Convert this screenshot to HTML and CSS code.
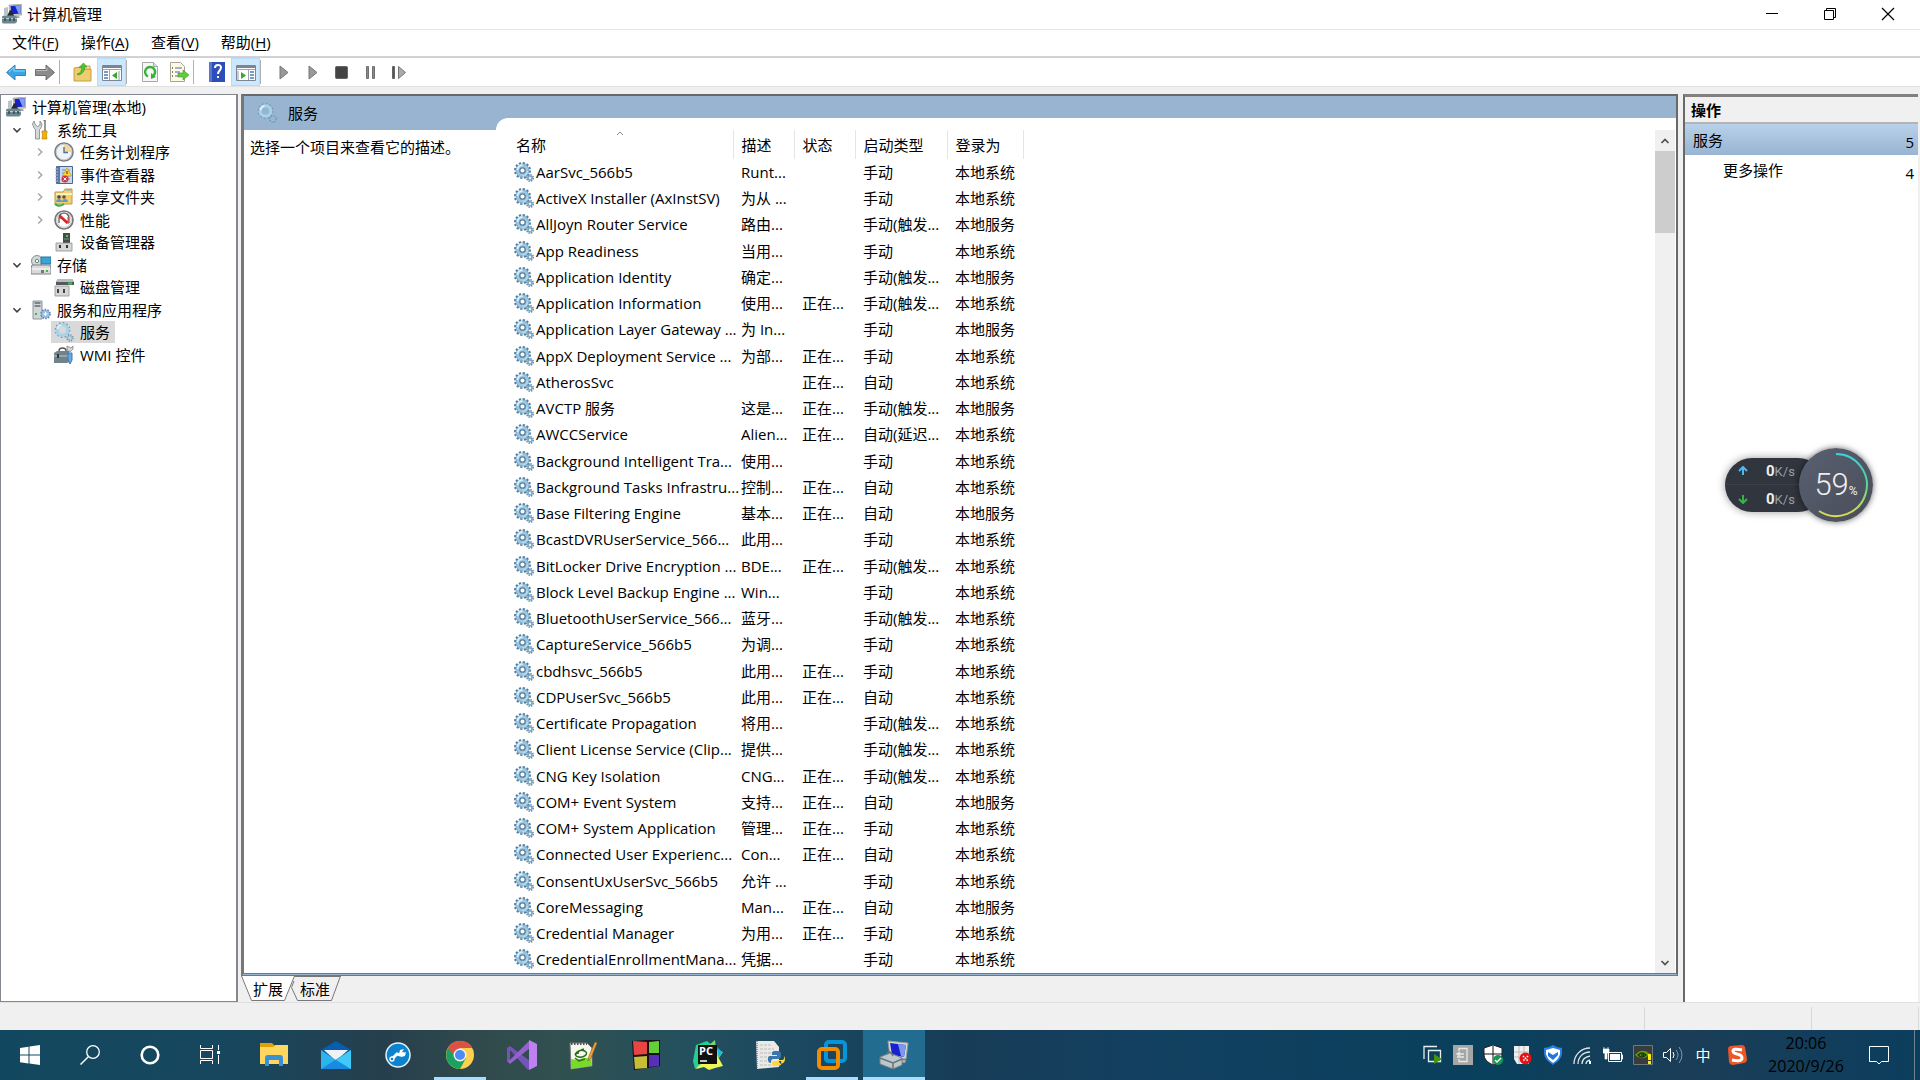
FILE: index.html
```html
<!DOCTYPE html>
<html lang="zh-CN">
<head>
    <meta charset="UTF-8">
    <meta name="viewport" content="width=device-width, initial-scale=1.0">
    <title>计算机管理</title>
    <link rel="stylesheet" href="styles.css">
</head>
<body>
    <!-- Shared icons -->
    <svg class="sprite" aria-hidden="true">
        <symbol id="computer" viewBox="0 0 20 20">
            <path d="M7 1l13-1v11l-12 1z" fill="#c9c8c0" stroke="#8d8d88" stroke-width=".5"/>
            <path d="M8.500 2l10-.7v8.200l-9 .8z" fill="#1420c8"/>
            <path d="M13 1.700l5.500-.4v8.200l-2 .2z" fill="#7f9df5"/>
            <path d="M2 4l4-1v8H2z" fill="#b8c4cc"/>
            <path d="M5 12l3-6 2 1 2 5z" fill="#262a33"/>
            <path d="M11 12h6l1 2h-6z" fill="#aaa"/>
            <path d="M0 12.500l2-1h10l3 1.500v5l-2 1.500H1l-1-1z" fill="#6d8791"/>
            <path d="M0 14.500h15" stroke="#b9cdd3"/>
            <path d="M3 14v3M8 14v3M12 14v3" stroke="#34444c" stroke-width="1.500"/>
        </symbol>
        <symbol id="gear" viewBox="0 0 20 20">
            <circle cx="8.500" cy="8.500" r="7.600" fill="none" stroke="#4f7c9e" stroke-width="1.800" stroke-dasharray="2.300 1.680"/>
            <circle cx="8.500" cy="8.500" r="6.500" fill="#9cc8e4" stroke="#6d9cbc" stroke-width=".8"/>
            <path d="M3.500 8a5 5 0 0 1 5-5" fill="none" stroke="#dcf1fc" stroke-width="1.800"/>
            <path d="M13.500 9a5 5 0 0 1-5 4.700" fill="none" stroke="#b8dcf0" stroke-width="1.500"/>
            <circle cx="8.500" cy="8.500" r="2.700" fill="#fff" stroke="#587c98" stroke-width="1.300"/>
            <circle cx="16" cy="16" r="3.200" fill="none" stroke="#5f89a8" stroke-width="1.600" stroke-dasharray="1.400 1.110"/>
            <circle cx="16" cy="16" r="2" fill="#e8f4fa" stroke="#7fa6c2" stroke-width="1.600"/>
        </symbol>
        <symbol id="gear-light" viewBox="0 0 20 20">
            <circle cx="8.500" cy="8" r="7.200" fill="none" stroke="#7499b6" stroke-width="1.400" stroke-dasharray="1.700 2.070"/>
            <circle cx="8.500" cy="8" r="5.300" fill="none" stroke="#a6d2ea" stroke-width="3"/>
            <path d="M3.500 7a5 5 0 0 1 4-4" fill="none" stroke="#e4f6fd" stroke-width="1.500"/>
            <circle cx="16" cy="16" r="3" fill="none" stroke="#6b8eaa" stroke-width="1.500" stroke-dasharray="1.200 1.150"/>
            <circle cx="16" cy="16" r="1.800" fill="none" stroke="#98bdd5" stroke-width="1.300"/>
        </symbol>
        <symbol id="down" viewBox="0 0 10 10"><path d="M2 3.500l3 3 3-3" fill="none" stroke="#404040" stroke-width="1.300"/></symbol>
        <symbol id="right" viewBox="0 0 10 10"><path d="M3.500 2L6.500 5 3.500 8" fill="none" stroke="#a6a6a6" stroke-width="1.200"/></symbol>
        <symbol id="play" viewBox="0 0 20 20"><path d="M6 4v13l8-6.500z" fill="#999" stroke="#777"/></symbol>
    </svg>

    <header class="titlebar">
        <svg class="icon"><use href="#computer"/></svg>
        <h1>计算机管理</h1>
        <div class="window-buttons">
            <button aria-label="最小化"><svg viewBox="0 0 14 14"><path d="M1 6.500h12" stroke="#000"/></svg></button>
            <button aria-label="还原"><svg viewBox="0 0 14 14"><path d="M1.500 3.500h9v9h-9zM3.500 3.500v-2h9v9h-2" fill="none" stroke="#000"/></svg></button>
            <button aria-label="关闭"><svg viewBox="0 0 14 14"><path d="M1 1l12 12M13 1L1 13" stroke="#000" stroke-width="1.200"/></svg></button>
        </div>
    </header>

    <nav class="menubar">
        <button>文件(<u>F</u>)</button>
        <button>操作(<u>A</u>)</button>
        <button>查看(<u>V</u>)</button>
        <button>帮助(<u>H</u>)</button>
    </nav>

    <div class="toolbar">
        <button aria-label="后退"><svg class="icon" viewBox="0 0 20 20"><path d="M.5 10.500L9 3v4.500h10.500v6H9V18z" fill="#35a7e8" stroke="#4a7fa5"/><path d="M3 10l5-4.500V9h11" fill="none" stroke="#8fd6fb"/></svg></button>
        <button aria-label="前进"><svg class="icon" viewBox="0 0 20 20"><path d="M19.500 10.500L11 3v4.500H.5v6H11V18z" fill="#8b8b8b" stroke="#6c6c6c"/><path d="M1 8.500h11V5.500" fill="none" stroke="#bbb"/></svg></button>
        <span class="separator"></span>
        <button aria-label="向上"><svg class="icon" viewBox="0 0 20 20"><path d="M1 6l7-1 1 2h9v12H1z" fill="#f0cb6f" stroke="#c99e45"/><path d="M11 4h6v3h-6z" fill="#f9e6ac" stroke="#c99e45"/><path d="M4 12c4-1 5-4 4.500-7L6 5.500 10.500 1 14 5l-2.500.2C12 9 9 12.500 5 13z" fill="#4dc52d" stroke="#3a8f2a" stroke-width=".6"/></svg></button>
        <button class="active" aria-label="显示/隐藏控制台树"><svg class="icon" viewBox="0 0 20 20"><path d="M.5 3.500h19v15H.5z" fill="#fff" stroke="#7d8690"/><path d="M1 4h18v2H1z" fill="#7d8690"/><path d="M1 7.500h18M7.500 8v10" stroke="#9da6ae"/><path d="M2 10h4M2 13h4M2 16h4" stroke="#4d79ad" stroke-width="1.400"/><path d="M10 13.500L15 10v7z" fill="#38a82c"/><path d="M17 9v9" stroke="#c5ccd3" stroke-width="2"/></svg></button>
        <span class="separator"></span>
        <button aria-label="刷新"><svg class="icon" viewBox="0 0 20 20"><path d="M2.500.5h11l4 4v15h-15z" fill="#f6f6f6" stroke="#a8a8a8"/><path d="M13.500.5v4h4" fill="#ddd" stroke="#a8a8a8"/><path d="M8 14.500A5 5 0 1 1 13 14" fill="none" stroke="#35b338" stroke-width="2.400"/><path d="M11 11v6l5-2z" fill="#35b338"/></svg></button>
        <button aria-label="导出列表"><svg class="icon" viewBox="0 0 20 20"><path d="M1.500.5h10l4 4v15h-14z" fill="#fdfae6" stroke="#a8a491"/><path d="M3 6h1M3 10h1M3 14h1" stroke="#555" stroke-width="1.500"/><path d="M6 6h7M6 10h5M6 14h5" stroke="#8e91c5" stroke-width="1.500"/><path d="M9 11h5V8l6 5-6 5v-3H9z" fill="#60cb3d" stroke="#3f9c2e" stroke-width=".6"/></svg></button>
        <span class="separator"></span>
        <button aria-label="帮助"><svg class="icon" viewBox="0 0 20 20"><path d="M2 0h16v20H2z" fill="#2c4eb8"/><path d="M2 0h3v20H2z" fill="#5876cf"/><path d="M8 6c0-4 6-4 6-.5 0 3-3 3-3 6.500" fill="none" stroke="#fff" stroke-width="2"/><path d="M10 14h2v2h-2z" fill="#fff"/></svg></button>
        <button class="active" aria-label="显示/隐藏操作窗格"><svg class="icon" viewBox="0 0 20 20"><path d="M.5 3.500h19v15H.5z" fill="#fff" stroke="#7d8690"/><path d="M1 4h18v2H1z" fill="#7d8690"/><path d="M1 7.500h18M12.500 8v10" stroke="#9da6ae"/><path d="M14 10h4M14 13h4M14 16h4" stroke="#4d79ad" stroke-width="1.400"/><path d="M10 13.500L5 10v7z" fill="#38a82c"/><path d="M2 9v9" stroke="#c5ccd3" stroke-width="2"/></svg></button>
        <span class="separator"></span>
        <button aria-label="启动服务"><svg class="icon"><use href="#play"/></svg></button>
        <button aria-label="继续服务"><svg class="icon"><use href="#play"/></svg></button>
        <button aria-label="停止服务"><svg class="icon" viewBox="0 0 20 20"><rect x="3.500" y="4.500" width="12" height="12" rx="1" fill="#444" stroke="#666"/></svg></button>
        <button aria-label="暂停服务"><svg class="icon" viewBox="0 0 20 20"><path d="M5.500 4.500h2v12h-2zM11.500 4.500h2v12h-2z" fill="#888" stroke="#707070"/></svg></button>
        <button aria-label="重新启动服务"><svg class="icon" viewBox="0 0 20 20"><path d="M2.500 4.500h2v12h-2z" fill="#555" stroke="#666"/><path d="M8.500 4.500v12l7-6z" fill="#aaa" stroke="#777"/></svg></button>
    </div>

    <main class="workspace">
        <aside class="tree">
            <ul>
                <li><span class="node"><svg class="icon"><use href="#computer"/></svg>计算机管理(本地)</span></li>
                <li class="level-1">
                    <button aria-label="折叠"><svg><use href="#down"/></svg></button>
                    <span class="node"><svg class="icon" viewBox="0 0 20 20"><path d="M3 1L1.500 4 3 8l1.500 1.500V19h4V9.500L10 8l1-4-2-3v4L6.500 6.500 4.500 5z" fill="#d5d9da" stroke="#7e8486" stroke-width=".8"/><path d="M12.500.5h1.500V11" fill="none" stroke="#777" stroke-width="1.500"/><path d="M11 11h5v2l-.7 1 .7 5h-5l.7-5-.7-1z" fill="#f5b000" stroke="#bd8500" stroke-width=".7"/></svg>系统工具</span>
                </li>
                <li class="level-2">
                    <button aria-label="展开"><svg><use href="#right"/></svg></button>
                    <span class="node"><svg class="icon" viewBox="0 0 20 20"><circle cx="10" cy="10" r="9" fill="#eef3f8" stroke="#7b7f84" stroke-width="1.700"/><circle cx="10" cy="10" r="7.800" fill="none" stroke="#c4c9ce"/><path d="M10 2.500V10h7.500A7.500 7.500 0 0 0 10 2.500z" fill="#f7d797"/><path d="M10 5v5.500h4" fill="none" stroke="#51729c" stroke-width="1.400"/></svg>任务计划程序</span>
                </li>
                <li class="level-2">
                    <button aria-label="展开"><svg><use href="#right"/></svg></button>
                    <span class="node"><svg class="icon" viewBox="0 0 20 20"><path d="M2.500 1.500h16v17h-16z" fill="#c6d9f0" stroke="#4b6796"/><path d="M3 2h3v16H3z" fill="#5a79b0"/><path d="M1 4h3M1 7h3M1 10h3M1 13h3M1 16h3" stroke="#bbb"/><path d="M8 5h8M8 8h8M8 11h8M8 14h8" stroke="#708dbb"/><path d="M13 3l4.500 8h-9z" fill="#ffd633" stroke="#c49a12" stroke-width=".6"/><path d="M13 6v3" stroke="#333"/><circle cx="11" cy="14" r="3.500" fill="#d9323b"/><path d="M9.500 12.500l3 3m0-3l-3 3" stroke="#fff"/></svg>事件查看器</span>
                </li>
                <li class="level-2">
                    <button aria-label="展开"><svg><use href="#right"/></svg></button>
                    <span class="node"><svg class="icon" viewBox="0 0 20 20"><path d="M1 5h8l2-3h7v15H1z" fill="#f2cf72" stroke="#bd984b"/><path d="M2 7h16" stroke="#fff0b5" stroke-width="2"/><path d="M12 3h5" stroke="#76a9ce"/><circle cx="5" cy="10" r="1.800" fill="#374c61"/><circle cx="10" cy="10" r="1.800" fill="#6a4e31"/><path d="M2 15c0-4 6-4 6 0zM8 15c0-4 6-4 6 0z" fill="#599bc8"/><path d="M1 17c3 3 6 2 9 0" fill="none" stroke="#36aa4c" stroke-width="2"/></svg>共享文件夹</span>
                </li>
                <li class="level-2">
                    <button aria-label="展开"><svg><use href="#right"/></svg></button>
                    <span class="node"><svg class="icon" viewBox="0 0 20 20"><circle cx="10" cy="10" r="9" fill="#fff" stroke="#777" stroke-width="1.700"/><circle cx="10" cy="10" r="7.300" fill="none" stroke="#c4c4c4"/><path d="M5 13V8a5 5 0 0 1 10 0v5" fill="none" stroke="#555" stroke-width="1.200"/><path d="M6 6L13.500 13" stroke="#df2029" stroke-width="2.600"/><path d="M6 5v4M14 7v7" stroke="#df2029"/></svg>性能</span>
                </li>
                <li class="level-2">
                    <span class="node"><svg class="icon" viewBox="0 0 20 20"><path d="M9 1h7v10H9z" fill="#454c4b"/><path d="M12 3h2v2h-2z" fill="#42d35a"/><path d="M10 7h5" stroke="#888"/><path d="M2 11h16v8H2z" fill="#d5d6d7" stroke="#8f9091" stroke-width=".8"/><path d="M5 13h2v3H5zM12 13h2v3h-2z" fill="#333"/></svg>设备管理器</span>
                </li>
                <li class="level-1">
                    <button aria-label="折叠"><svg><use href="#down"/></svg></button>
                    <span class="node"><svg class="icon" viewBox="0 0 20 20"><circle cx="6" cy="6" r="5.500" fill="#d2d9d9" stroke="#87908f"/><circle cx="6" cy="6" r="1.700" fill="#fff" stroke="#77807f"/><path d="M10 2h10v7H10z" fill="#38a4d8" stroke="#26779f"/><path d="M1 10h18l1 3v6H0v-6z" fill="#d9dadb" stroke="#7f8385"/><path d="M1 14h18" stroke="#fff"/><path d="M15 15h2v2h-2z" fill="#36bb42"/><path d="M10 15h3v3h-3z" fill="#777"/></svg>存储</span>
                </li>
                <li class="level-2">
                    <span class="node"><svg class="icon" viewBox="0 0 20 20"><path d="M4 2h14l2 3v3H2V5z" fill="#555b5b"/><path d="M4 2h14l2 3H2z" fill="#b5babb"/><path d="M14 5.500h4v2h-4z" fill="#35ce55"/><path d="M1 9h14v10H1z" fill="#d5d6d7" stroke="#8f9091" stroke-width=".8"/><path d="M3 12h2v4H3zM9 12h2v4H9z" fill="#444"/></svg>磁盘管理</span>
                </li>
                <li class="level-1">
                    <button aria-label="折叠"><svg><use href="#down"/></svg></button>
                    <span class="node"><svg class="icon" viewBox="0 0 20 20"><path d="M2 1h9v18H2z" fill="#cfd5d8" stroke="#8c969b"/><path d="M3.500 3h6M3.500 6h6" stroke="#5d6c73" stroke-width="1.500"/><path d="M4 14h2" stroke="#36bb42" stroke-width="2"/><circle cx="14.500" cy="14" r="4.300" fill="#87acd0" stroke="#5f86b1" stroke-width="2" stroke-dasharray="1.500 1.200"/><circle cx="14.500" cy="14" r="3.700" fill="#9dbfe0"/><path d="M12.500 14h4m-2-2v4" stroke="#fff"/></svg>服务和应用程序</span>
                </li>
                <li class="level-2">
                    <span class="node selected"><svg class="icon"><use href="#gear-light"/></svg>服务</span>
                </li>
                <li class="level-2">
                    <span class="node"><svg class="icon" viewBox="0 0 20 20"><path d="M5 6c0-4 7-4 7 0" fill="none" stroke="#555" stroke-width="1.500"/><path d="M0 8l3-2h12v11l-2 1H0z" fill="#71838b"/><path d="M0 11h14" stroke="#bdc9ce"/><path d="M4 9v4" stroke="#333" stroke-width="2"/><path d="M13 1v4l3 2 3-3V1l-2 2-2-1z" fill="#d4d8da" stroke="#777" stroke-width=".7"/><path d="M14 8h4v7l-2 4-2-4z" fill="#6aaae2" stroke="#3f76ac"/></svg>WMI 控件</span>
                </li>
            </ul>
        </aside>

        <section class="center">
            <div class="view">
                <div class="detail">
                    <h2><svg class="icon"><use href="#gear-light"/></svg>服务</h2>
                    <p>选择一个项目来查看它的描述。</p>
                </div>
                <div class="list">
                    <table>
                        <colgroup><col class="col-name"><col class="col-desc"><col class="col-state"><col class="col-type"><col class="col-user"></colgroup>
                        <thead>
                            <tr><th>名称<svg class="sort" viewBox="0 0 8 5"><path d="M1 4l3-3 3 3" fill="none" stroke="#888"/></svg></th><th>描述</th><th>状态</th><th>启动类型</th><th>登录为</th></tr>
                        </thead>
                        <tbody>
                            <tr><td><svg class="icon"><use href="#gear"/></svg>AarSvc_566b5</td><td>Runt...</td><td></td><td>手动</td><td>本地系统</td></tr>
                            <tr><td><svg class="icon"><use href="#gear"/></svg>ActiveX Installer (AxInstSV)</td><td>为从 ...</td><td></td><td>手动</td><td>本地系统</td></tr>
                            <tr><td><svg class="icon"><use href="#gear"/></svg>AllJoyn Router Service</td><td>路由...</td><td></td><td>手动(触发...</td><td>本地服务</td></tr>
                            <tr><td><svg class="icon"><use href="#gear"/></svg>App Readiness</td><td>当用...</td><td></td><td>手动</td><td>本地系统</td></tr>
                            <tr><td><svg class="icon"><use href="#gear"/></svg>Application Identity</td><td>确定...</td><td></td><td>手动(触发...</td><td>本地服务</td></tr>
                            <tr><td><svg class="icon"><use href="#gear"/></svg>Application Information</td><td>使用...</td><td>正在...</td><td>手动(触发...</td><td>本地系统</td></tr>
                            <tr><td><svg class="icon"><use href="#gear"/></svg>Application Layer Gateway ...</td><td>为 In...</td><td></td><td>手动</td><td>本地服务</td></tr>
                            <tr><td><svg class="icon"><use href="#gear"/></svg>AppX Deployment Service ...</td><td>为部...</td><td>正在...</td><td>手动</td><td>本地系统</td></tr>
                            <tr><td><svg class="icon"><use href="#gear"/></svg>AtherosSvc</td><td></td><td>正在...</td><td>自动</td><td>本地系统</td></tr>
                            <tr><td><svg class="icon"><use href="#gear"/></svg>AVCTP 服务</td><td>这是...</td><td>正在...</td><td>手动(触发...</td><td>本地服务</td></tr>
                            <tr><td><svg class="icon"><use href="#gear"/></svg>AWCCService</td><td>Alien...</td><td>正在...</td><td>自动(延迟...</td><td>本地系统</td></tr>
                            <tr><td><svg class="icon"><use href="#gear"/></svg>Background Intelligent Tra...</td><td>使用...</td><td></td><td>手动</td><td>本地系统</td></tr>
                            <tr><td><svg class="icon"><use href="#gear"/></svg>Background Tasks Infrastru...</td><td>控制...</td><td>正在...</td><td>自动</td><td>本地系统</td></tr>
                            <tr><td><svg class="icon"><use href="#gear"/></svg>Base Filtering Engine</td><td>基本...</td><td>正在...</td><td>自动</td><td>本地服务</td></tr>
                            <tr><td><svg class="icon"><use href="#gear"/></svg>BcastDVRUserService_566...</td><td>此用...</td><td></td><td>手动</td><td>本地系统</td></tr>
                            <tr><td><svg class="icon"><use href="#gear"/></svg>BitLocker Drive Encryption ...</td><td>BDE...</td><td>正在...</td><td>手动(触发...</td><td>本地系统</td></tr>
                            <tr><td><svg class="icon"><use href="#gear"/></svg>Block Level Backup Engine ...</td><td>Win...</td><td></td><td>手动</td><td>本地系统</td></tr>
                            <tr><td><svg class="icon"><use href="#gear"/></svg>BluetoothUserService_566...</td><td>蓝牙...</td><td></td><td>手动(触发...</td><td>本地系统</td></tr>
                            <tr><td><svg class="icon"><use href="#gear"/></svg>CaptureService_566b5</td><td>为调...</td><td></td><td>手动</td><td>本地系统</td></tr>
                            <tr><td><svg class="icon"><use href="#gear"/></svg>cbdhsvc_566b5</td><td>此用...</td><td>正在...</td><td>手动</td><td>本地系统</td></tr>
                            <tr><td><svg class="icon"><use href="#gear"/></svg>CDPUserSvc_566b5</td><td>此用...</td><td>正在...</td><td>自动</td><td>本地系统</td></tr>
                            <tr><td><svg class="icon"><use href="#gear"/></svg>Certificate Propagation</td><td>将用...</td><td></td><td>手动(触发...</td><td>本地系统</td></tr>
                            <tr><td><svg class="icon"><use href="#gear"/></svg>Client License Service (Clip...</td><td>提供...</td><td></td><td>手动(触发...</td><td>本地系统</td></tr>
                            <tr><td><svg class="icon"><use href="#gear"/></svg>CNG Key Isolation</td><td>CNG...</td><td>正在...</td><td>手动(触发...</td><td>本地系统</td></tr>
                            <tr><td><svg class="icon"><use href="#gear"/></svg>COM+ Event System</td><td>支持...</td><td>正在...</td><td>自动</td><td>本地服务</td></tr>
                            <tr><td><svg class="icon"><use href="#gear"/></svg>COM+ System Application</td><td>管理...</td><td>正在...</td><td>手动</td><td>本地系统</td></tr>
                            <tr><td><svg class="icon"><use href="#gear"/></svg>Connected User Experienc...</td><td>Con...</td><td>正在...</td><td>自动</td><td>本地系统</td></tr>
                            <tr><td><svg class="icon"><use href="#gear"/></svg>ConsentUxUserSvc_566b5</td><td>允许 ...</td><td></td><td>手动</td><td>本地系统</td></tr>
                            <tr><td><svg class="icon"><use href="#gear"/></svg>CoreMessaging</td><td>Man...</td><td>正在...</td><td>自动</td><td>本地服务</td></tr>
                            <tr><td><svg class="icon"><use href="#gear"/></svg>Credential Manager</td><td>为用...</td><td>正在...</td><td>手动</td><td>本地系统</td></tr>
                            <tr><td><svg class="icon"><use href="#gear"/></svg>CredentialEnrollmentMana...</td><td>凭据...</td><td></td><td>手动</td><td>本地系统</td></tr>
                        </tbody>
                    </table>
                    <div class="scrollbar">
                        <button aria-label="向上滚动"><svg viewBox="0 0 10 10"><path d="M1.500 7L5 3.500 8.500 7" fill="none" stroke="#505050" stroke-width="1.700"/></svg></button>
                        <div class="thumb"></div>
                        <button aria-label="向下滚动"><svg viewBox="0 0 10 10"><path d="M1.500 3L5 6.500 8.500 3" fill="none" stroke="#505050" stroke-width="1.700"/></svg></button>
                    </div>
                </div>
            </div>
            <div class="tabs">
                <button class="current"><svg viewBox="0 0 54 26"><path d="M0 0l10 25h34L53 0z" fill="#fff"/><path d="M.5 0l10 24.500h33L53.500 0" fill="none" stroke="#777"/></svg><span>扩展</span></button>
                <button><svg viewBox="0 0 54 26"><path d="M3.500 .5h46M.500 11.500l6 13h34L49.500 0M.500 11.500L3 5" fill="none" stroke="#777"/></svg><span>标准</span></button>
            </div>
        </section>

        <aside class="actions">
            <h2>操作</h2>
            <button class="group"><span>服务</span><span class="mark">5</span></button>
            <button class="more"><span>更多操作</span><span class="mark">4</span></button>
        </aside>
    </main>

    <footer class="statusbar"><span></span><span></span><span></span></footer>

    <div class="taskbar">
        <div class="system">
            <button aria-label="开始"><svg viewBox="0 0 20 20"><path d="M0 3l8.500-1.200v7.700H0zM9.500 1.600L20 0v9.500H9.500zM0 10.500h8.500v7.900L0 17.200zM9.500 10.500H20V20L9.500 18.500z" fill="#fff"/></svg></button>
            <button aria-label="搜索"><svg viewBox="0 0 20 20"><circle cx="13" cy="7" r="6.300" fill="none" stroke="#fff" stroke-width="1.300"/><path d="M8.500 11.500L.5 19.500" stroke="#fff" stroke-width="1.500"/></svg></button>
            <button aria-label="Cortana"><svg viewBox="0 0 20 20"><circle cx="10" cy="10" r="8.300" fill="none" stroke="#fff" stroke-width="2.600"/></svg></button>
            <button aria-label="任务视图"><svg viewBox="0 0 20 20"><path d="M.5 0v3.500h12V0M.5 5.500h12v8H.5zM.5 19v-3.500h12V19M18.500 0v5M18.500 10v9" fill="none" stroke="#fff"/><path d="M17 6h3v3h-3z" fill="#fff"/></svg></button>
        </div>
        <div class="apps">
            <button aria-label="文件资源管理器"><svg viewBox="0 0 30 30"><path d="M1 3h12l2 2v3H1z" fill="#dfa008"/><path d="M1 7h13l2-2h13v19H1z" fill="#ffd65e"/><path d="M6 26V18q0-3 3-3h12q3 0 3 3v8h-4v-6H10v6z" fill="#3c91d6"/></svg></button>
            <button aria-label="邮件"><svg viewBox="0 0 30 30"><path d="M0 10L15 1l15 9-15 9z" fill="#075eb0"/><path d="M3 10h24L15 21z" fill="#f1f2f3"/><path d="M0 10v19h30V10L15 20z" fill="#2db4ef"/><path d="M0 29L30 10v19z" fill="#188be1"/><path d="M15 20l15 9V10z" fill="#42c8f4"/></svg></button>
            <button aria-label="系统工具"><svg viewBox="0 0 30 30"><circle cx="15" cy="15" r="12" fill="#0b83cf" stroke="#e8f3fa" stroke-width="1.500"/><path d="M9 19l5-5 3 1 4-2" fill="none" stroke="#fff" stroke-width="3"/><circle cx="9" cy="19" r="2" fill="#0b83cf" stroke="#fff" stroke-width="1.300"/><path d="M21 9l-4 1-1 4 2 3 4-1 1-4-3 1-1-1z" fill="#fff"/></svg></button>
            <button class="running" aria-label="Google Chrome"><svg viewBox="0 0 30 30"><circle cx="15" cy="15" r="14" fill="#ffd04b"/><path d="M3 8a14 14 0 0 0 12 21l6-11-6-3z" fill="#1aa260"/><path d="M3 8A14 14 0 0 1 27.500 8H15l-6 7z" fill="#dd5145"/><circle cx="15" cy="15" r="6.500" fill="#f1f1f1"/><circle cx="15" cy="15" r="5" fill="#4c8bf5"/></svg></button>
            <button aria-label="Visual Studio"><svg viewBox="0 0 30 30"><path d="M0 8l3-2 20 15v9l-3-1L3 10v12l-3-1z" fill="#7752b8"/><path d="M0 21l3 3L23 8V0L3 20z" fill="#9660d1"/><path d="M22 0l8 4v22l-8 4z" fill="#bd82f0"/></svg></button>
            <button aria-label="Notepad++"><svg viewBox="0 0 30 30"><path d="M1 3h17l5 5v18L2 29z" fill="#f5f7ef" stroke="#777"/><path d="M2 19c7 2 13-2 20-1v8L2 29z" fill="#77db29"/><path d="M2 4h16" stroke="#555" stroke-width="2" stroke-dasharray="1.500 1.500"/><path d="M6 15c2-5 8-6 11-3 2 2-2 6-7 5s-4-4 0-4M6 18l4 3 6-2M12 10l3-1" fill="none" stroke="#2b6a1b" stroke-width="1.400"/><path d="M28 3l-6 15-3 3 1-5 6-14z" fill="#f2a637" stroke="#91602a" stroke-width=".7"/></svg></button>
            <button aria-label="色块"><svg viewBox="0 0 30 30"><path d="M1 1l15-1h13v26L3 30z" fill="#181018"/><path d="M2 1l14 1v12L3 15z" fill="#e74541"/><path d="M18 2l10-1v12H18z" fill="#63ce38"/><path d="M3 17l13-1v12L4 29z" fill="#c8bd37"/><path d="M18 15h10v11l-10 1z" fill="#5730b9"/></svg></button>
            <button aria-label="PyCharm"><svg viewBox="0 0 30 30"><path d="M3 5l11-4 5 4-2 13L2 29 0 21z" fill="#24cf91"/><path d="M16 5l6-5 1 9 7 3-4 6z" fill="#7ed76a"/><path d="M24 7l5 5-3 6z" fill="#13bce8"/><path d="M4 27l19-14 7 13-8 2-6 2-5-3-8 2z" fill="#edf658"/><path d="M5 5h19v19H5z" fill="#111"/><path d="M7 21h7" stroke="#fff" stroke-width="1.500"/><text x="6" y="15" fill="#fff" font-size="11" font-weight="700">PC</text></svg></button>
            <button aria-label="Python"><svg viewBox="0 0 30 30"><path d="M1 1h18l5 6v20L2 29z" fill="#e9e9e7"/><path d="M2 1v28" stroke="#555" stroke-dasharray="1 1"/><path d="M5 5h12M5 9h14M5 13h12M5 17h10M5 21h8M5 25h12" stroke="#bbb" stroke-dasharray="3 1"/><path d="M21 11c-5 0-4 2-4 4h5v1h-7c-3 0-3 7 1 7 0-4 1-4 4-4 4 0 6 0 6-4s-1-4-5-4z" fill="#3977aa"/><path d="M22 26c6 0 4-3 4-5h-4c-5 0-5 1-5 3s1 2 5 2zM22 20h5c2 0 2-1 2-4 2 3 1 7-3 8z" fill="#ffd642"/></svg></button>
            <button class="running" aria-label="VMware Workstation"><svg viewBox="0 0 30 30"><rect x="9" y="2" width="19" height="19" rx="3" fill="none" stroke="#0795d8" stroke-width="4"/><rect x="2" y="9" width="19" height="19" rx="3" fill="none" stroke="#f38b00" stroke-width="4"/><path d="M9 12v6q0 3 3 3h6" fill="none" stroke="#0795d8" stroke-width="4"/></svg></button>
            <button class="running focused" aria-label="计算机管理"><svg viewBox="0 0 30 30"><path d="M9 1l20 2-2 16-16-2z" fill="#d9dad4" stroke="#999"/><path d="M11 3l16 2-2 12-12-2z" fill="#1822cc"/><path d="M19 4l8 1-2 12-3-1z" fill="#7c99ed"/><path d="M15 18l12 2-1 3-13-1z" fill="#aaa"/><path d="M1 17l10-4 12 5v7l-9 4-13-5z" fill="#bcc8cb" stroke="#758086"/><path d="M1 18l13 5 9-4M8 14q3-5 6 2M14 23v6" fill="none" stroke="#65747b" stroke-width="1.500"/></svg></button>
        </div>

        <div class="tray">
            <button aria-label="虚拟机"><svg viewBox="0 0 20 20"><path d="M1 14V1.500h13M5.500 5.500h12v11h-12z" fill="none" stroke="#e8eef1" stroke-width="1.300"/><path d="M11 9v10l8-5z" fill="#45930b"/></svg></button>
            <button aria-label="设备"><svg viewBox="0 0 20 20"><path d="M0 0h20v20H0z" fill="#a6a6a6"/><path d="M6 6V3.500h8v13H6V14M4 9h7M4 12h7M7 7L4 9l3 2" fill="none" stroke="#e8e8e8" stroke-width="1.300"/></svg></button>
            <button aria-label="安全中心"><svg viewBox="0 0 20 20"><path d="M10 0l9 3v6c0 5-4 8-9 11C4 17 1 14 1 9V3z" fill="#fff" stroke="#222"/><path d="M10 1v18M1 9h18" stroke="#111"/><circle cx="15" cy="15" r="5" fill="#169653"/><path d="M12 15l2 2 4-4" fill="none" stroke="#fff" stroke-width="1.400"/></svg></button>
            <button aria-label="磁盘提示"><svg viewBox="0 0 20 20"><path d="M1 1h15v18H4L1 14z" fill="#f0f0f0"/><path d="M6 1v18M11 1v18M1 7h15M1 12h15" stroke="#bbb"/><circle cx="12.500" cy="13.500" r="6" fill="#e31318"/><path d="M10 11l5 5m0-5l-5 5" stroke="#fff" stroke-width="1.500" stroke-dasharray="1.500 1"/></svg></button>
            <button aria-label="电脑管家"><svg viewBox="0 0 20 20"><path d="M1 3q5 0 9-3 4 3 9 3v6q-1 6-9 11-8-5-9-11z" fill="#2681ea"/><path d="M3 5l7-2 7 2v4q-1 5-7 9-6-4-7-9z" fill="#fff"/><path d="M5 7l5 3 5-3v3l-5 5-5-4z" fill="#2275df"/></svg></button>
            <button aria-label="网络"><svg viewBox="0 0 20 20"><path d="M1 19C1 10 8 3 17 3M5 19C5 12 10 7 17 7M9 19C9 15 12 12 17 11M13 19q0-3 4-4" fill="none" stroke="#dfe7ea" stroke-width="1.300"/><path d="M16 16h2v3h-2z" fill="#fff"/></svg></button>
            <button aria-label="电源"><svg viewBox="0 0 20 20"><path d="M5.500 7.500h13v9h-13z" fill="none" stroke="#fff"/><path d="M7 9h10v6H7z" fill="#fff"/><path d="M19 10h1v4h-1zM0 4h6v4H4v6H2V8H0zM1 2v2M5 2v2" fill="#fff" stroke="#fff" stroke-width=".7"/></svg></button>
            <button aria-label="NVIDIA 设置"><svg viewBox="0 0 20 20"><path d="M.5.5h19v19H.5z" fill="#393c3c" stroke="#727878"/><path d="M2 10q7-8 15-1-7 8-15 1z" fill="#65a40f"/><path d="M5 10q4-4 8 0-4 4-8 0zM8 10h3" fill="none" stroke="#1d3410" stroke-width="1.300"/><path d="M15 9h3v6h-3zM15 16h3v3h-3z" fill="#ffed00"/></svg></button>
            <button aria-label="音量"><svg viewBox="0 0 20 20"><path d="M.5 7.500h3l4-4v13l-4-4h-3z" fill="none" stroke="#fff"/><path d="M10 7q2 3 0 6" fill="none" stroke="#fff"/><path d="M13 5q4 5 0 10M16 2q6 8 0 16" fill="none" stroke="#8198a5"/></svg></button>
            <button aria-label="输入法">中</button>
            <button class="sogou" aria-label="搜狗输入法"><svg viewBox="0 0 20 20"><path d="M1 4q0-2 2-3l12-1q2 0 3 2l2 12q0 3-3 4l-11 2q-3 0-4-3z" fill="#ed5727"/><path d="M15 5q-9-2-9 1 0 2 4 3 5 1 5 4 0 4-10 2" fill="none" stroke="#fff" stroke-width="3"/></svg></button>
            <button class="clock"><time>20:06</time><span>2020/9/26</span></button>
            <button class="notify" aria-label="通知"><svg viewBox="0 0 20 20"><path d="M.5 1.500h19v15h-7L10 19l-2.500-2.500h-7z" fill="none" stroke="#fff"/></svg></button>
            <button class="desktop" aria-label="显示桌面"></button>
        </div>
    </div>

    <!-- Floating network and memory monitor -->
    <div class="monitor">
        <div class="speeds">
            <div><svg viewBox="0 0 10 10"><path d="M5 9V2M1 5l4-4 4 4" fill="none" stroke="#4eb8ef" stroke-width="2"/></svg><b>0</b><span>K/s</span></div>
            <div><svg viewBox="0 0 10 10"><path d="M5 1v7M1 5l4 4 4-4" fill="none" stroke="#36b344" stroke-width="2"/></svg><b>0</b><span>K/s</span></div>
        </div>
        <div class="memory">
            <svg viewBox="0 0 74 74">
                <defs><linearGradient id="arc" x1="0" y1="0" x2="0" y2="1"><stop offset="0" stop-color="#3fd0df"/><stop offset=".5" stop-color="#55d78e"/><stop offset="1" stop-color="#e1dc50"/></linearGradient></defs>
                <path d="M37 6a31 31 0 1 1-17 57" fill="none" stroke="url(#arc)" stroke-width="2"/>
            </svg>
            <strong>59</strong><small>%</small>
        </div>
    </div>
</body>
</html>
```
FILE: styles.css
```css
* {
    margin: 0;
    padding: 0;
    box-sizing: border-box;
}

body {
    height: 100vh;
    display: flex;
    flex-direction: column;
    overflow: hidden;
    background: #f0f0f0;
    color: #000;
    font-family: "Open Sans", "Noto Sans CJK SC", sans-serif;
    font-size: 15px;
    line-height: 20px;
    white-space: nowrap;
}

button {
    border: none;
    background: none;
    color: inherit;
    font: inherit;
}

svg {
    display: block;
    flex-shrink: 0;
}

ul {
    list-style: none;
}

.sprite {
    display: none;
}

.icon {
    width: 20px;
    height: 20px;
}

/* Title, menu and toolbar */
.titlebar {
    height: 30px;
    display: flex;
    align-items: center;
    gap: 5px;
    padding: 0 3px 2px 2px;
    background: #fff;
    border-bottom: 1px solid #e5e5e5;
}

.titlebar h1 {
    font-size: 15px;
    font-weight: normal;
}

.window-buttons {
    display: flex;
    margin-left: auto;
}

.window-buttons button {
    width: 58px;
    height: 28px;
    display: flex;
    align-items: center;
    justify-content: center;
}

.window-buttons svg {
    width: 14px;
    height: 14px;
}

.menubar {
    height: 28px;
    display: flex;
    gap: 2px;
    padding: 0 2px 2px;
    background: #fff;
    border-bottom: 2px solid #d2d2d5;
}

.menubar button {
    padding: 0 10px;
}

.menubar u {
    text-underline-offset: 2px;
}

.toolbar {
    height: 29px;
    display: flex;
    align-items: stretch;
    padding-left: 1px;
    background: #fff;
    border-bottom: 1px solid #e0e0e0;
}

.toolbar button {
    width: 29px;
    display: flex;
    align-items: center;
    justify-content: center;
}

.toolbar .active {
    background: #cce8ff;
    border: 1px solid #b6dcfb;
}

.separator {
    width: 1px;
    margin: 2px 8px 2px 0;
    background: #b0b0b0;
}

/* Three panes */
.workspace {
    flex: 1;
    min-height: 0;
    display: flex;
    gap: 3px;
    padding: 7px 2px 0 0;
}

.tree {
    width: 238px;
    padding: 1px 2px;
    background: #fff;
    border: 1px solid #828790;
    border-right-width: 2px;
}

.tree li {
    height: 22px;
    display: flex;
    align-items: center;
}

.tree li:nth-child(even) {
    height: 23px;
}

.tree button {
    width: 23px;
    height: 20px;
    display: flex;
    align-items: center;
    justify-content: center;
}

.tree button svg {
    width: 12px;
    height: 12px;
}

.node {
    height: 100%;
    display: flex;
    align-items: center;
    gap: 6px;
    padding: 0 5px 0 3px;
}

.level-1 {
    padding-left: 2px;
}

.level-2 {
    padding-left: 48px;
}

.level-2 button {
    margin-left: -23px;
}

.selected {
    background: #d9d9d9;
}

.center {
    flex: 1;
    min-width: 0;
    display: flex;
    flex-direction: column;
}

.view {
    flex: 1;
    min-height: 0;
    display: flex;
    background: #99b4d1;
    border: 2px solid #696969;
    border-left: 3px solid #777;
    border-bottom: 3px double #777;
}

.detail {
    width: 252px;
    display: flex;
    flex-direction: column;
}

.detail h2 {
    height: 34px;
    display: flex;
    align-items: center;
    gap: 11px;
    padding-left: 13px;
    font-size: 15px;
    font-weight: normal;
}

.detail p {
    flex: 1;
    padding: 7px 6px;
    background: #fff;
}

.list {
    flex: 1;
    min-width: 0;
    display: flex;
    align-items: flex-start;
    justify-content: space-between;
    margin-top: 22px;
    padding: 12px 1px 0 12px;
    background: #fff;
    border-top-left-radius: 12px;
}

table {
    table-layout: fixed;
    width: 515px;
    border-collapse: collapse;
}

.col-name {
    width: 225px;
}

.col-desc,
.col-state {
    width: 61px;
}

.col-type {
    width: 92px;
}

.col-user {
    width: 76px;
}

th {
    position: relative;
    height: 29px;
    padding: 1px 0 0 8px;
    border-right: 1px solid #e5e5e5;
    font-weight: normal;
    text-align: left;
}

.sort {
    position: absolute;
    top: 1px;
    left: 48%;
    width: 8px;
    height: 5px;
}

td {
    height: 26px;
    padding-left: 8px;
}

td:first-child {
    display: flex;
    align-items: center;
    gap: 2px;
    padding-left: 6px;
}

tr:nth-child(4n) td {
    height: 27px;
}

.scrollbar {
    width: 20px;
    height: 100%;
    display: flex;
    flex-direction: column;
    background: #f0f0f0;
}

.scrollbar button {
    height: 21px;
    display: flex;
    align-items: center;
    justify-content: center;
}

.scrollbar button:last-child {
    margin-top: auto;
}

.scrollbar svg {
    width: 10px;
    height: 10px;
}

.thumb {
    height: 82px;
    background: #cdcdcd;
}

.tabs {
    height: 26px;
    display: flex;
}

.tabs button {
    position: relative;
    width: 50px;
    padding: 0 10px;
    text-align: left;
}

.tabs .current {
    padding-left: 12px;
}

.tabs button + button {
    padding-left: 9px;
}

.tabs svg {
    position: absolute;
    top: 0;
    left: 0;
    width: 54px;
    height: 26px;
}

.tabs span {
    position: relative;
}

.actions {
    width: 235px;
    margin-left: 2px;
    display: flex;
    flex-direction: column;
    background: #fff;
    border-top: 3px solid #808080;
    border-left: 2px solid #696969;
}

.actions h2 {
    height: 27px;
    padding: 3px 6px;
    background: #f0f0f0;
    border-bottom: 2px solid #b4b4b4;
    font-size: 15px;
    font-weight: bold;
}

.actions button {
    height: 31px;
    display: flex;
    align-items: center;
    justify-content: space-between;
    padding: 0 4px 0 8px;
}

.actions .group {
    background: linear-gradient(#b9d1ea, #99b4d1);
}

.actions .more {
    height: 30px;
    padding-left: 38px;
}

.mark {
    padding-top: 5px;
}

.statusbar {
    height: 28px;
    display: flex;
    justify-content: flex-end;
    padding-right: 1px;
    border-top: 1px solid #e0e0e0;
}

.statusbar span {
    width: 107px;
    margin-top: 4px;
    border-right: 1px solid #d9d9d9;
}

.statusbar span:nth-child(2) {
    width: 167px;
}

/* Taskbar */
.taskbar {
    height: 50px;
    display: flex;
    background: linear-gradient(90deg, #12485f 0%, #17475e 12%, #263f4d 20%, #304a4c 25%, #31504f 29%, #25505d 35%, #1a4860 42%, #173c57 50%, #124060 60%, #09405c 78%, #1b3d57 88%, #0b3e5d 100%);
}

.taskbar button {
    height: 50px;
    display: flex;
    align-items: center;
    justify-content: center;
}

.system {
    display: flex;
    margin-right: 3px;
}

.system button {
    width: 60px;
}

.system svg,
.tray svg {
    width: 20px;
    height: 20px;
}

.apps {
    display: flex;
}

.taskbar .apps button {
    width: 62px;
    border-bottom: 3px solid transparent;
    padding-top: 3px;
}

.apps svg {
    width: 30px;
    height: 30px;
}

.taskbar .apps .running {
    width: 52px;
    margin: 0 5px;
    border-bottom-color: #a9dcff;
}

.taskbar .apps .focused {
    width: 62px;
    margin: 0;
    background: #226d8f;
}

.tray {
    display: flex;
    margin-left: auto;
    color: #fff;
}

.tray button {
    width: 30px;
}

.tray .sogou {
    width: 38px;
}

.tray .clock {
    width: 100px;
    padding-bottom: 1px;
    flex-direction: column;
    gap: 3px;
    color: #000;
    font-size: 16px;
}

.tray .notify {
    width: 46px;
    margin-right: 12px;
}

.tray .desktop {
    width: 6px;
    border-left: 1px solid #71838e;
}

/* Monitor floats over the desktop */
.monitor {
    position: absolute;
    top: 448px;
    right: 47px;
    display: flex;
    align-items: center;
    color: #eee;
    font-family: Roboto, "Noto Sans CJK SC", sans-serif;
}

.speeds {
    width: 100px;
    height: 54px;
    margin-right: -26px;
    background: #30353e;
    border-radius: 27px;
    box-shadow: 0 0 8px rgba(0, 0, 0, 0.4);
}

.speeds div {
    height: 27px;
    display: flex;
    align-items: center;
    padding-left: 13px;
}

.speeds div:first-child {
    border-bottom: 1px solid #3b414a;
}

.speeds svg {
    width: 10px;
    height: 10px;
    margin-right: 18px;
}

.speeds span {
    padding-top: 2px;
    color: #9b9fa5;
    font-size: 13px;
}

.memory {
    position: relative;
    width: 74px;
    height: 74px;
    display: flex;
    align-items: center;
    justify-content: center;
    background: linear-gradient(135deg, #596070, #484d59);
    border-radius: 50%;
    box-shadow: 0 0 6px rgba(0, 0, 0, 0.6);
}

.memory svg {
    position: absolute;
    top: 0;
    left: 0;
    width: 74px;
    height: 74px;
}

.memory strong {
    font-size: 31px;
    font-weight: 300;
}

.memory small {
    padding-top: 12px;
    font-size: 12px;
}
```
